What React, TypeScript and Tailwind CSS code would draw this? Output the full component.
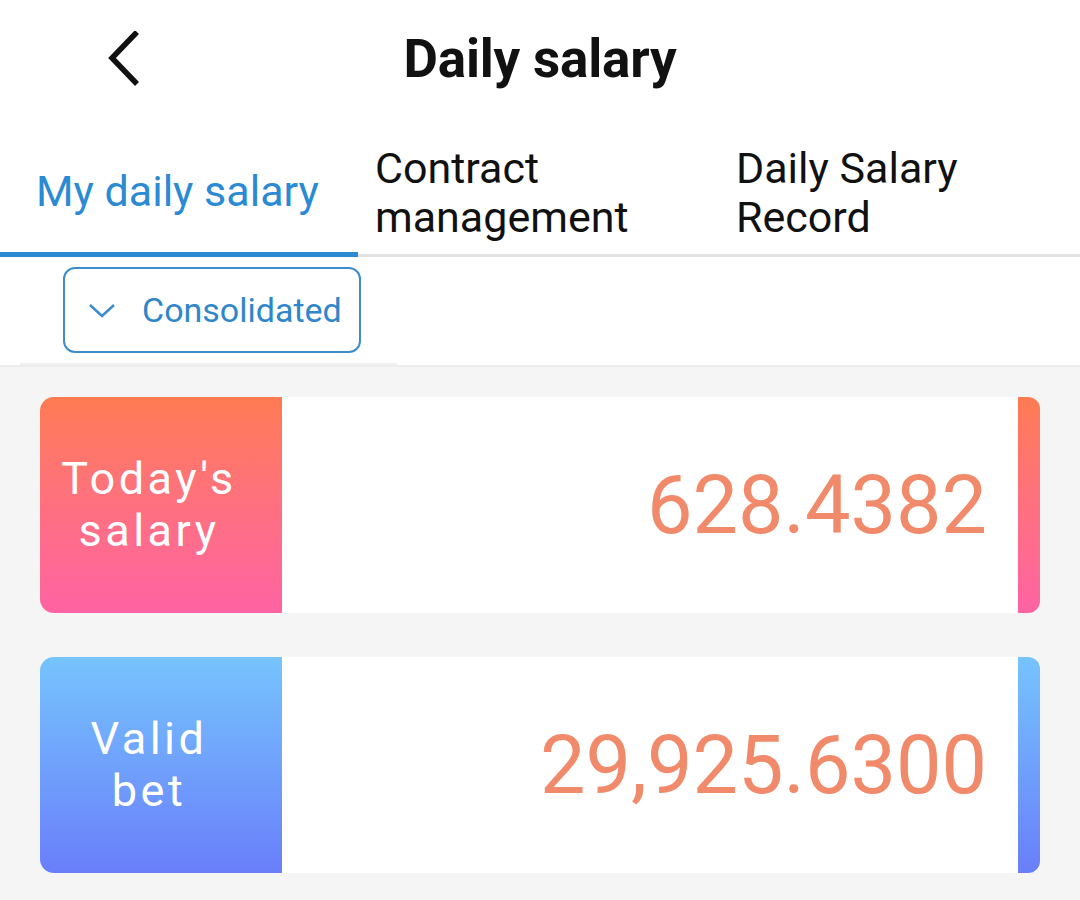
export default function App() {
  const tabs = [
    { label: "My daily salary", active: true },
    { label: "Contract management", active: false },
    { label: "Daily Salary Record", active: false },
  ];

  return (
    <div className="w-[1080px] h-[900px] bg-[#f5f5f5] font-['Roboto',sans-serif] overflow-hidden">
      {/* header */}
      <div className="bg-white h-[120px] flex items-center relative">
        <button className="ml-[103px] w-[42px] h-[60px] flex items-center justify-center">
          <svg width="36" height="58" viewBox="0 0 36 58" fill="none">
            <path d="M31 1 L6 27 L31 53" stroke="#111" strokeWidth="5.5" strokeLinecap="butt" strokeLinejoin="miter" />
          </svg>
        </button>
        <h1 className="absolute left-0 right-0 text-center text-[53px] font-bold text-[#111] tracking-[-0.2px] pointer-events-none">
          Daily salary
        </h1>
      </div>

      {/* tabs */}
      <div className="bg-white flex h-[137px]">
        {tabs.map((t) => (
          <div
            key={t.label}
            className={
              t.active
                ? "w-[358px] flex items-center border-b-[5px] border-[#2b8ad4] pl-[36px] pt-[10px]"
                : "w-[361px] flex items-center border-b-[3px] border-[#e2e2e2] pl-[17px] pr-[60px] pt-[12px]"
            }
          >
            <span
              className={
                t.active
                  ? "text-[43px] leading-[49px] text-[#2b8ad4]"
                  : "text-[43px] leading-[49px] text-[#111]"
              }
            >
              {t.label}
            </span>
          </div>
        ))}
      </div>

      {/* filter */}
      <div className="bg-white h-[110px] border-b-2 border-[#ececec] flex flex-col">
        <div className="flex-1 flex items-start pt-[10px]">
          <button className="ml-[63px] w-[298px] h-[86px] border-2 border-[#3d8dcc] rounded-[12px] flex items-center pl-[23px] gap-[26px]">
            <svg width="28" height="16" viewBox="0 0 28 16" fill="none">
              <path d="M2 3 L14 14 L26 3" stroke="#3d8dcc" strokeWidth="2.5" />
            </svg>
            <span className="text-[34px] text-[#2f87c9]">Consolidated</span>
          </button>
        </div>
        <div className="ml-[20px] w-[377px] h-[2px] bg-[#f1f1f1]" />
      </div>

      {/* cards */}
      <div className="px-[40px] pt-[30px] flex flex-col gap-[44px]">
        <div className="flex h-[216px]">
          <div className="w-[242px] rounded-l-[14px] bg-gradient-to-b from-[#fe7b52] to-[#ff63a3] flex items-center justify-center pr-[24px]">
            <span className="text-white text-[45px] leading-[52px] tracking-[3.5px] text-center">
              Today's
              <br />
              salary
            </span>
          </div>
          <div className="flex-1 bg-white flex items-center justify-end pr-[31px]">
            <span className="text-[81px] text-[#f08a6a] leading-none">628.4382</span>
          </div>
          <div className="w-[22px] rounded-r-[12px] bg-gradient-to-b from-[#fe7b52] to-[#ff63a3]" />
        </div>

        <div className="flex h-[216px]">
          <div className="w-[242px] rounded-l-[14px] bg-gradient-to-b from-[#76c3fd] to-[#6a7efa] flex items-center justify-center pr-[24px]">
            <span className="text-white text-[45px] leading-[52px] tracking-[3.5px] text-center">
              Valid
              <br />
              bet
            </span>
          </div>
          <div className="flex-1 bg-white flex items-center justify-end pr-[31px]">
            <span className="text-[81px] text-[#f08a6a] leading-none">29,925.6300</span>
          </div>
          <div className="w-[22px] rounded-r-[12px] bg-gradient-to-b from-[#76c3fd] to-[#6a7efa]" />
        </div>
      </div>
    </div>
  );
}
